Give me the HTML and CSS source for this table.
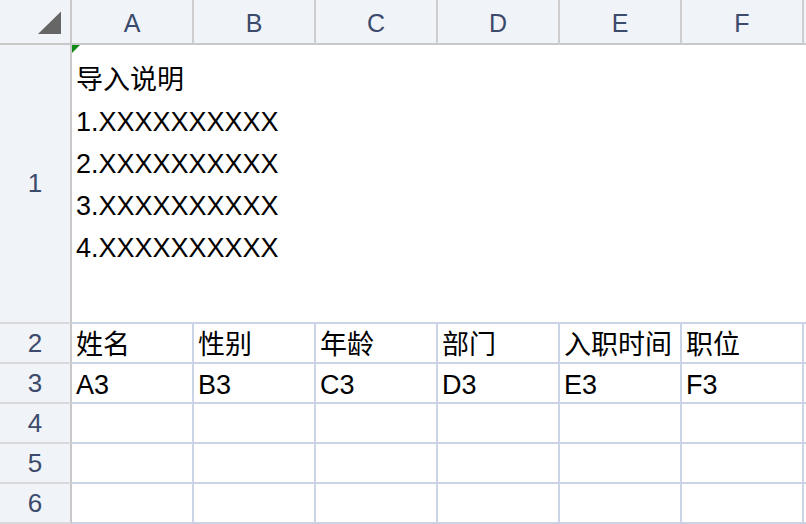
FILE: index.html
```html
<!DOCTYPE html>
<html lang="zh-CN">
<head>
<meta charset="utf-8">
<title>Sheet</title>
<link rel="stylesheet" href="styles.css">
</head>
<body>
<div class="sheet">
  <div class="corner">
    <svg class="corner-icon" width="72" height="45" viewBox="0 0 72 45"><polygon points="38,34 61,11.5 61,34" fill="#666666"/></svg>
  </div>
  <div class="colhead">A</div>
  <div class="colhead">B</div>
  <div class="colhead">C</div>
  <div class="colhead">D</div>
  <div class="colhead">E</div>
  <div class="colhead">F</div>
  <div class="colhead colhead-end"></div>

  <div class="rowhead">1</div>
  <div class="merged">
    <span class="flag"></span>
    <div class="line">导入说明</div>
    <div class="line">1.XXXXXXXXXX</div>
    <div class="line">2.XXXXXXXXXX</div>
    <div class="line">3.XXXXXXXXXX</div>
    <div class="line">4.XXXXXXXXXX</div>
  </div>

  <div class="rowhead">2</div>
  <div class="cell">姓名</div>
  <div class="cell">性别</div>
  <div class="cell">年龄</div>
  <div class="cell">部门</div>
  <div class="cell">入职时间</div>
  <div class="cell">职位</div>
  <div class="cell"></div>

  <div class="rowhead">3</div>
  <div class="cell">A3</div>
  <div class="cell">B3</div>
  <div class="cell">C3</div>
  <div class="cell">D3</div>
  <div class="cell">E3</div>
  <div class="cell">F3</div>
  <div class="cell"></div>

  <div class="rowhead">4</div>
  <div class="cell"></div><div class="cell"></div><div class="cell"></div><div class="cell"></div><div class="cell"></div><div class="cell"></div><div class="cell"></div>

  <div class="rowhead">5</div>
  <div class="cell"></div><div class="cell"></div><div class="cell"></div><div class="cell"></div><div class="cell"></div><div class="cell"></div><div class="cell"></div>

  <div class="rowhead">6</div>
  <div class="cell"></div><div class="cell"></div><div class="cell"></div><div class="cell"></div><div class="cell"></div><div class="cell"></div><div class="cell"></div>
</div>
</body>
</html>
```

FILE: styles.css
```css
html, body {
  margin: 0;
  padding: 0;
  background: #ffffff;
}

body {
  font-family: "Liberation Sans", "Noto Sans CJK SC", sans-serif;
  width: 806px;
  height: 524px;
  overflow: hidden;
}

.sheet {
  display: grid;
  grid-template-columns: 72px repeat(6, 122px) 1fr;
  grid-template-rows: 45px 279px repeat(5, 40px);
  width: 806px;
}

.corner,
.colhead {
  background: #f0f3f7;
  border-bottom: 2px solid #c8c8c8;
  box-sizing: border-box;
}

.corner {
  border-right: 2px solid #c8c8c8;
  position: relative;
}

.corner-icon {
  position: absolute;
  left: 0;
  top: 0;
}

.colhead {
  border-right: 2px solid #cdcdcd;
  color: #3c4a6c;
  font-size: 25px;
  display: flex;
  align-items: center;
  justify-content: center;
  padding-top: 3px;
}

.colhead-end {
  border-right: none;
}

.rowhead {
  background: #f0f3f7;
  border-right: 2px solid #c8c8c8;
  border-bottom: 2px solid #d9d9d9;
  box-sizing: border-box;
  color: #3c4a6c;
  font-size: 26px;
  display: flex;
  align-items: center;
  justify-content: center;
}

.merged {
  grid-column: 2 / -1;
  position: relative;
  border-bottom: 2px solid #cbd3e6;
  box-sizing: border-box;
  padding: 14px 4px 0;
  font-size: 27px;
  line-height: 42px;
  color: #000000;
  white-space: nowrap;
}

.flag {
  position: absolute;
  left: 0;
  top: 0;
  width: 0;
  height: 0;
  border-top: 8px solid #138a16;
  border-right: 8px solid transparent;
}

.cell {
  border-right: 2px solid #cbd3e6;
  border-bottom: 2px solid #cbd3e6;
  box-sizing: border-box;
  padding: 4px 4px 0;
  font-size: 27px;
  line-height: 34px;
  color: #000000;
  white-space: nowrap;
  overflow: hidden;
}
```
